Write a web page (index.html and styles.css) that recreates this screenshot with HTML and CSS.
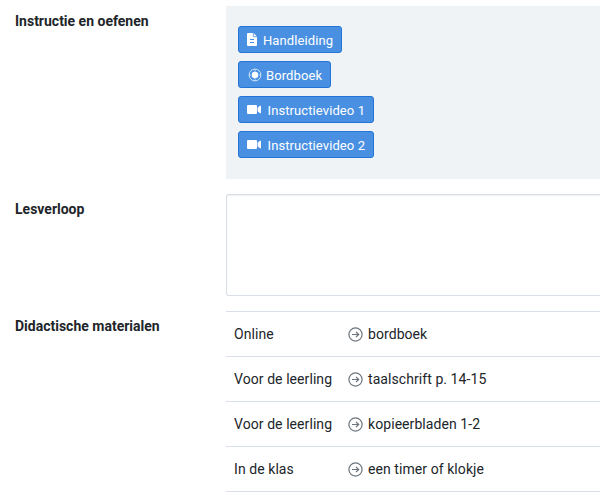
FILE: index.html
```html
<!DOCTYPE html>
<html lang="nl">
<head>
  <meta charset="UTF-8">
  <title>Lesvoorbereiding</title>
  <meta name="viewport" content="width=device-width, initial-scale=1.0">
  <link rel="stylesheet" href="styles.css">
</head>
<body>
<div class="lesson">
  <!-- Instructie -->
  <div class="row">
    <div class="label">Instructie en oefenen</div>
    <div class="panel">
      <a class="btn" href="#handleiding">
        <svg class="icon-file" viewBox="0 0 10 13" width="10" height="13"><path fill="#fff" d="M1 0h5.500L10 3.500V12a1 1 0 0 1-1 1H1a1 1 0 0 1-1-1V1a1 1 0 0 1 1-1z"/><path fill="none" stroke="#4a90e2" stroke-width=".8" d="M6.300 0v3.700H10"/><path fill="#4a90e2" d="M3 6h4v1H3zM3 9h4v1H3z"/></svg>
        <span>Handleiding</span>
      </a>
      <a class="btn" href="#bordboek">
        <svg class="icon-board" viewBox="0 0 14 14" width="14" height="14"><circle cx="7" cy="7" r="5.900" fill="none" stroke="#fff" stroke-width=".9" stroke-opacity=".8"/><circle cx="7" cy="7" r="3.300" fill="#fff"/><path d="M7 1v3M7 10v3M1 7h2M11 7h2" stroke="#fff" stroke-opacity=".5"/></svg>
        <span>Bordboek</span>
      </a>
      <a class="btn" href="#video1">
        <svg class="icon-video" viewBox="0 0 14 9" width="14" height="9"><path fill="#fff" d="M1 0h8a1 1 0 0 1 1 1v7a1 1 0 0 1-1 1H1a1 1 0 0 1-1-1V1a1 1 0 0 1 1-1zM10.600 2.800L13 .8q1-.5 1 .5v6.400q0 1-1 .5l-2.400-2z"/></svg>
        <span>Instructievideo 1</span>
      </a>
      <a class="btn" href="#video2">
        <svg class="icon-video" viewBox="0 0 14 9" width="14" height="9"><path fill="#fff" d="M1 0h8a1 1 0 0 1 1 1v7a1 1 0 0 1-1 1H1a1 1 0 0 1-1-1V1a1 1 0 0 1 1-1zM10.600 2.800L13 .8q1-.5 1 .5v6.400q0 1-1 .5l-2.400-2z"/></svg>
        <span>Instructievideo 2</span>
      </a>
    </div>
  </div>

  <!-- Lesverloop -->
  <div class="row">
    <div class="label">Lesverloop</div>
    <div class="editor"></div>
  </div>

  <!-- Materialen -->
  <div class="row">
    <div class="label">Didactische materialen</div>
    <div class="materials">
      <div class="material">
        <span class="kind">Online</span>
        <svg class="icon-arrow" viewBox="0 0 15 15" width="15" height="15"><circle cx="7.500" cy="7.500" r="6.600"/><path d="M4 7.500h6.500M8 5l2.700 2.500L8 10"/></svg>
        <span>bordboek</span>
      </div>
      <div class="material">
        <span class="kind">Voor de leerling</span>
        <svg class="icon-arrow" viewBox="0 0 15 15" width="15" height="15"><circle cx="7.500" cy="7.500" r="6.600"/><path d="M4 7.500h6.500M8 5l2.700 2.500L8 10"/></svg>
        <span>taalschrift p. 14-15</span>
      </div>
      <div class="material">
        <span class="kind">Voor de leerling</span>
        <svg class="icon-arrow" viewBox="0 0 15 15" width="15" height="15"><circle cx="7.500" cy="7.500" r="6.600"/><path d="M4 7.500h6.500M8 5l2.700 2.500L8 10"/></svg>
        <span>kopieerbladen 1-2</span>
      </div>
      <div class="material">
        <span class="kind">In de klas</span>
        <svg class="icon-arrow" viewBox="0 0 15 15" width="15" height="15"><circle cx="7.500" cy="7.500" r="6.600"/><path d="M4 7.500h6.500M8 5l2.700 2.500L8 10"/></svg>
        <span>een timer of klokje</span>
      </div>
    </div>
  </div>
</div>
</body>
</html>
```
FILE: styles.css
```css
* {
  box-sizing: border-box;
}

body {
  margin: 0;
  background: #fff;
  color: #212529;
  font-family: Roboto, sans-serif;
  font-size: 14px;
  line-height: 20px;
  overflow: hidden;
}

.lesson {
  display: flex;
  flex-direction: column;
  gap: 15px;
  padding: 6px 0 0 15px;
}

.row {
  display: grid;
  grid-template-columns: 211px 1fr;
}

.label {
  padding-top: 5px;
  font-weight: bold;
}

/* Buttons */
.panel {
  display: flex;
  flex-direction: column;
  align-items: flex-start;
  gap: 8px;
  height: 173px;
  padding: 20px 12px;
  background: #f0f3f6;
}

.btn {
  display: flex;
  align-items: center;
  height: 27px;
  padding: 2px 8px 0;
  border: 1px solid #2275d7;
  border-radius: 3px;
  background: #4a90e2;
  color: #fff;
  font-size: 13px;
  letter-spacing: 0.1px;
  text-decoration: none;
  white-space: nowrap;
}

.icon-file {
  margin: -2px 6px 0 0;
}

.icon-board {
  margin: -2px 4px 0 1px;
}

.icon-video {
  margin: -2px 6.500px 0 0;
}

/* Text field */
.editor {
  height: 102px;
  border: 1px solid #d8dfe8;
  border-right: none;
  border-radius: 3px 0 0 3px;
  box-shadow: inset 0 1px 1px rgba(0, 0, 0, 0.06);
}

/* Materials list */
.materials {
  border-top: 1px solid #d8dfe8;
}

.material {
  display: flex;
  align-items: center;
  height: 45px;
  padding-left: 8px;
  border-bottom: 1px solid #d8dfe8;
  letter-spacing: 0.07px;
}

.kind {
  width: 114px;
}

.icon-arrow {
  margin-right: 5px;
  fill: none;
  stroke: #6c757d;
  stroke-width: 1.2;
}
```
